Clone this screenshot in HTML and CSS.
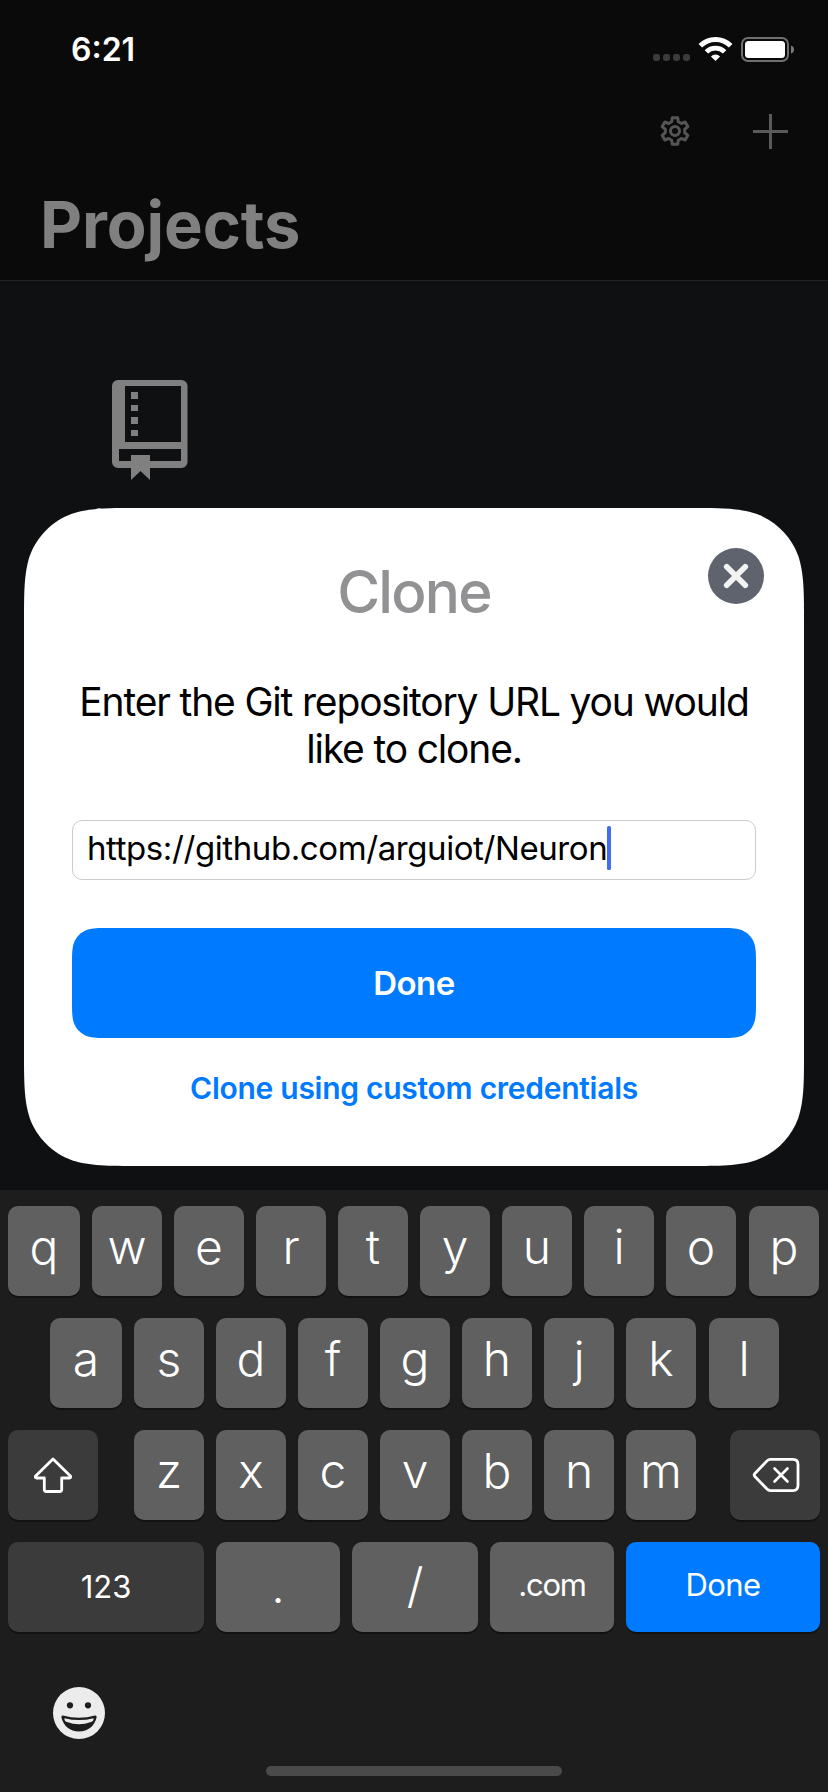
FILE: index.html
```html
<!DOCTYPE html>
<html lang="en">
<head>
<meta charset="utf-8">
<title>Projects</title>
<link rel="stylesheet" href="styles.css">
</head>
<body>
<div class="screen">
  <header class="header">
    <div class="status">
      <span class="clock">6:21</span>
      <svg class="status-icons" width="142" height="26" viewBox="0 0 142 26">
        <g fill="#3b3b3b">
          <rect x="1" y="17" width="7" height="7" rx="2.4"/>
          <rect x="11" y="17" width="7" height="7" rx="2.4"/>
          <rect x="21" y="17" width="7" height="7" rx="2.4"/>
          <rect x="31" y="17" width="7" height="7" rx="2.4"/>
        </g>
        <g transform="translate(63.5 24)" fill="none" stroke="#fff">
          <path d="M-15.2-15.2A21.5 21.5 0 0 1 15.2-15.2" stroke-width="5"/>
          <path d="M-9.1-9.1A12.9 12.9 0 0 1 9.1-9.1" stroke-width="4.8"/>
          <path d="M0 0L-4.6-4.6A6.5 6.5 0 0 1 4.6-4.6Z" fill="#fff" stroke="none"/>
        </g>
        <rect x="90" y="1" width="46" height="23" rx="6" fill="none" stroke="#6f6f6f" stroke-width="2"/>
        <rect x="93" y="4" width="40" height="17" rx="3.5" fill="#fff"/>
        <path d="M139 8.5Q142 9.5 142 12.5T139 16.5Z" fill="#7a7a7a"/>
      </svg>
    </div>
    <div class="toolbar">
      <svg width="32" height="32" viewBox="-16 -16 32 32" fill="none" stroke="#555" stroke-width="3" stroke-linejoin="round">
        <path d="M-2.7-13.3L2.7-13.3L3.3-9.3L6.4-7.51L10.17-8.99L12.87-4.31L9.7-1.79L9.7 1.79L12.87 4.31L10.17 8.99L6.4 7.51L3.3 9.3L2.7 13.3L-2.7 13.3L-3.3 9.3L-6.4 7.51L-10.17 8.99L-12.87 4.31L-9.7 1.79L-9.7-1.79L-12.87-4.31L-10.17-8.99L-6.4-7.51L-3.3-9.3Z"/>
        <circle r="4.5"/>
      </svg>
      <svg width="35" height="35" viewBox="0 0 35 35" fill="#5a5a5a">
        <path d="M16 0h3v16h16v3H19v16h-3V19H0v-3h16z"/>
      </svg>
    </div>
    <h1 class="title">Projects</h1>
  </header>

  <main class="projects">
    <div class="project">
      <svg width="76" height="100" viewBox="0 0 76 100" fill="#808080">
        <path fill-rule="evenodd" d="M6 0H69.5a6 6 0 0 1 6 6V82a6 6 0 0 1-6 6H6a6 6 0 0 1-6-6V6a6 6 0 0 1 6-6zM13 6V62H69V6zM7 69V81H69V69z"/>
        <path d="M19 75H38V100L28.5 91L19 100z"/>
        <path d="M19 12h7v7h-7zM19 25h7v6h-7zM19 37h7v7h-7zM19 50h7v6h-7z"/>
      </svg>
      <span class="project-name">Neuron</span>
    </div>
  </main>

  <section class="modal">
    <h2 class="modal-title">Clone</h2>
    <p class="modal-text">Enter the Git repository URL you would<br>like to clone.</p>
    <div class="field"><span class="url">https://github.com/arguiot/Neuron</span><span class="caret"></span></div>
    <div class="primary"><span>Done</span></div>
    <a class="link">Clone using custom credentials</a>
    <svg class="close" width="56" height="56" viewBox="0 0 56 56">
      <circle cx="28" cy="28" r="28" fill="#5f636e"/>
      <path d="M18.7 18.7L37.3 37.3M37.3 18.7L18.7 37.3" stroke="#f2f3f3" stroke-width="5.6" stroke-linecap="round"/>
    </svg>
  </section>

  <section class="keyboard">
    <div class="row">
      <div class="key wide">q</div><div class="key">w</div><div class="key">e</div><div class="key">r</div><div class="key">t</div><div class="key">y</div><div class="key">u</div><div class="key">i</div><div class="key">o</div><div class="key last">p</div>
    </div>
    <div class="row middle">
      <div class="key wide">a</div><div class="key">s</div><div class="key">d</div><div class="key">f</div><div class="key">g</div><div class="key">h</div><div class="key">j</div><div class="key">k</div><div class="key last">l</div>
    </div>
    <div class="row">
      <div class="key dark shift">
        <svg width="40" height="38" viewBox="0 0 40 38" fill="none" stroke="#fff" stroke-width="2.8" stroke-linejoin="round">
          <path d="M20 3L37.6 20.3Q38 22 36.5 22H28.7V33.5Q28.7 35.5 26.7 35.5H13.3Q11.3 35.5 11.3 33.5V22H3.5Q2 22 2.4 20.3Z"/>
        </svg>
      </div>
      <div class="key">z</div><div class="key">x</div><div class="key">c</div><div class="key">v</div><div class="key">b</div><div class="key">n</div><div class="key">m</div>
      <div class="key dark delete">
        <svg width="48" height="36" viewBox="0 0 48 36" fill="none" stroke="#fff" stroke-width="2.8" stroke-linecap="round" stroke-linejoin="round">
          <path d="M18.5 2.4H41Q46 2.4 46 7.4V28.6Q46 33.6 41 33.6H18.5Q16.5 33.6 15 32.1L2.9 19.5Q1.5 18 2.9 16.5L15 3.9Q16.5 2.4 18.5 2.4Z"/>
          <path d="M22.5 11.5L35.5 24.5M35.5 11.5L22.5 24.5" stroke-width="2.6"/>
        </svg>
      </div>
    </div>
    <div class="row">
      <div class="key dark small numbers">123</div>
      <div class="key dot">.</div>
      <div class="key slash">/</div>
      <div class="key small com">.com</div>
      <div class="key small done">Done</div>
    </div>
    <svg class="emoji" width="54" height="54" viewBox="-27 -27 54 54">
      <circle r="26" fill="#ececec"/>
      <circle cx="-9" cy="-7.7" r="3.1" fill="#1d1d1d"/>
      <circle cx="9" cy="-7.7" r="3.1" fill="#1d1d1d"/>
      <path d="M-16 2.5Q0 7 16 2.5Q18 2.3 17.6 4.5C15.5 13 9 18.5 0 18.5S-15.5 13-17.6 4.5Q-18 2.3-16 2.5Z" fill="#1d1d1d"/>
      <path d="M-14.5 5.2Q0 9 14.5 5.2Q15 8 12 9Q0 13.5-12 9Q-15 8-14.5 5.2Z" fill="#ececec"/>
    </svg>
    <div class="home"></div>
  </section>
</div>
</body>
</html>
```
FILE: styles.css
```css
* { box-sizing: border-box; }
body { margin: 0; background: #0f1012; font-family: Inter, "Liberation Sans", sans-serif; }
svg { display: block; flex: none; }
.screen { position: relative; display: flex; flex-direction: column; width: 828px; height: 1792px; overflow: hidden; background: #0f1012; }

.header { height: 281px; background: #0a0a0a; border-bottom: 1px solid #232323; }
.status { display: flex; justify-content: space-between; align-items: flex-start; height: 88px; padding: 29px 34px 0 71px; }
.clock { margin-top: 1px; color: #fff; font-size: 32px; font-weight: 600; line-height: 40px; }
.status-icons { margin-top: 8px; }
.toolbar { display: flex; justify-content: flex-end; align-items: center; gap: 62px; height: 86px; padding-right: 40px; }
.title { margin: 12px 0 0 40px; color: #808080; font-size: 65px; font-weight: 700; line-height: 78px; letter-spacing: -0.1px; }

.projects { flex: 1; padding: 99px 0 0 50px; }
.project { display: flex; flex-direction: column; align-items: center; width: 200px; }
.project-name { margin-top: 20px; color: #808080; font-size: 32px; line-height: 42px; }

.modal {
  position: absolute; left: 24px; top: 508px; width: 780px; height: 658px;
  display: flex; flex-direction: column; align-items: stretch; padding: 49px 48px 0;
  background: #fff; color: #000; text-align: center;
  clip-path: path("M116.2 0H663.8C697.3 0 714 0 732 5.7C751.7 12.8 767.2 28.3 774.3 48C780 66 780 82.7 780 116.2V541.8C780 575.3 780 592 774.3 610C767.2 629.7 751.7 645.2 732 652.3C714 658 697.3 658 663.8 658H116.2C82.7 658 66 658 48 652.3C28.3 645.2 12.8 629.7 5.7 610C0 592 0 575.3 0 541.8V116.2C0 82.7 0 66 5.7 48C12.8 28.3 28.3 12.8 48 5.7C66 0 82.7 0 116.2 0Z");
}
.modal-title { margin: 0; color: #929294; font-size: 58.5px; font-weight: 500; line-height: 70px; letter-spacing: -1.8px; }
.modal-text { margin: 51px -20px 0; font-size: 39px; line-height: 47px; letter-spacing: -1.17px; }
.field { display: flex; align-items: center; height: 60px; margin-top: 48px; padding: 0 0 4px 14px; border: 1px solid #cbcbcd; border-radius: 10px; }
.url { font-size: 33px; line-height: 40px; letter-spacing: -0.41px; white-space: nowrap; }
.caret { width: 4px; height: 44px; border-radius: 1.5px; background: #456cec; }
.primary {
  display: flex; align-items: center; justify-content: center; height: 110px; margin-top: 48px;
  background: #007aff; color: #fff; font-size: 33px; font-weight: 600; letter-spacing: -0.5px;
  clip-path: path("M36.7 0H647.3C657.9 0 663.2 0 668.8 1.8C675.1 4.1 679.9 8.9 682.2 15.2C684 20.8 684 26.1 684 36.7V73.3C684 83.9 684 89.2 682.2 94.8C679.9 101.1 675.1 105.9 668.8 108.2C663.2 110 657.9 110 647.3 110H36.7C26.1 110 20.8 110 15.2 108.2C8.9 105.9 4.1 101.1 1.8 94.8C0 89.2 0 83.9 0 73.3V36.7C0 26.1 0 20.8 1.8 15.2C4.1 8.9 8.9 4.1 15.2 1.8C20.8 0 26.1 0 36.7 0Z");
}
.link { margin-top: 32px; color: #007aff; font-size: 30px; font-weight: 600; line-height: 36px; letter-spacing: -0.27px; }
.close { position: absolute; right: 40px; top: 40px; }

.keyboard { display: flex; flex-direction: column; height: 602px; padding: 16px 8px 0; background: #1d1d1d; }
.row { display: flex; gap: 12px; height: 90px; margin-bottom: 22px; }
.row.middle { padding-left: 42px; }
.key { display: flex; align-items: center; justify-content: center; width: 70px; height: 90px; padding-bottom: 9px; border-radius: 10px; background: #606060; box-shadow: 0 2px 0 #111; color: #fff; font-size: 48px; font-weight: 340; }
.key.wide { width: 72px; }
.key.last { margin-left: 1px; }
.key.dark { width: 90px; padding: 0; background: #3b3b3b; }
.key.shift { margin-right: 24px; }
.key.delete { margin-left: 22px; padding-left: 1px; }
.key.small { font-size: 31px; font-weight: 400; }
.key.numbers { width: 196px; padding-bottom: 2px; }
.key.dot { width: 124px; padding-bottom: 3px; }
.key.slash { width: 126px; padding-bottom: 3px; }
.key.com { width: 124px; padding-bottom: 5px; letter-spacing: -1.2px; }
.key.done { width: 194px; padding-bottom: 5px; background: #007aff; letter-spacing: -0.6px; }
.emoji { margin: 32px 0 0 44px; }
.home { width: 296px; height: 10px; margin: 26px auto 0; border-radius: 5px; background: #4a4a4a; }
```
